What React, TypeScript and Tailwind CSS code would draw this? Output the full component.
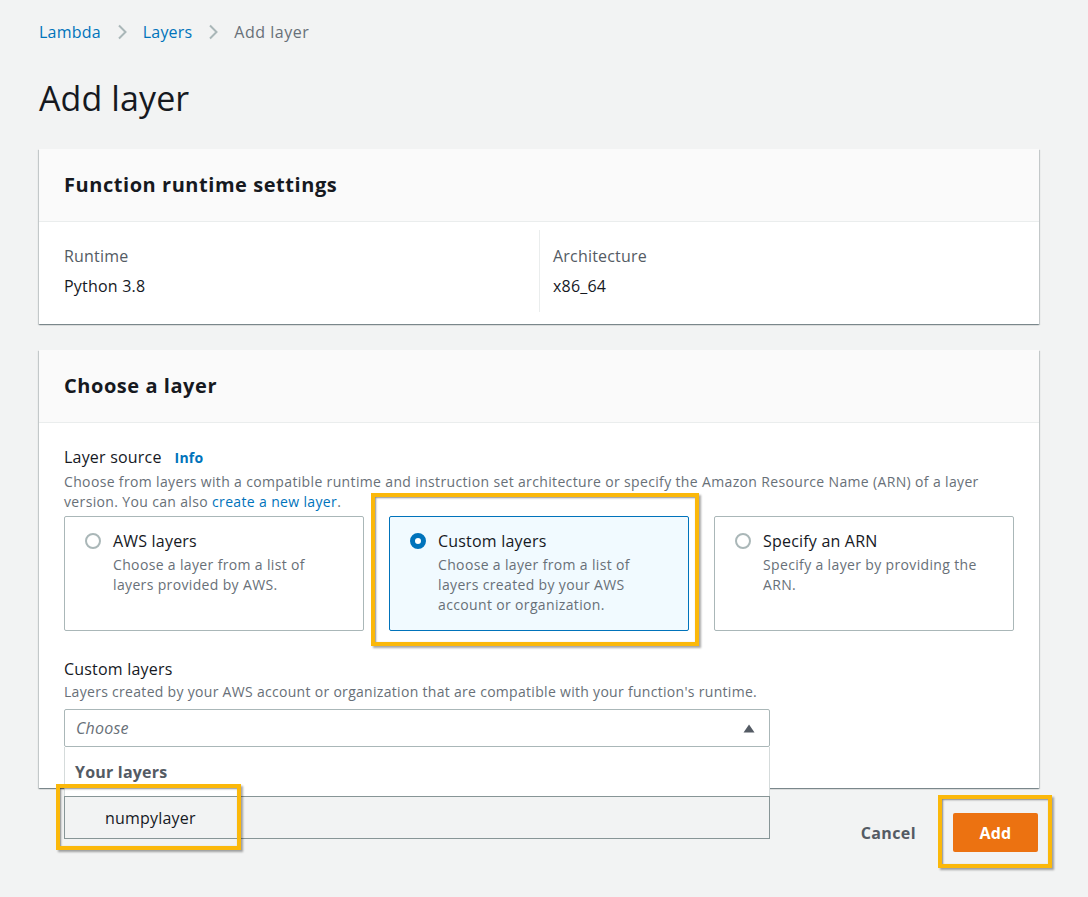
import { ReactNode } from 'react';

const tiles = [
  {
    id: 'aws',
    title: 'AWS layers',
    desc: 'Choose a layer from a list of layers provided by AWS.',
    selected: false,
  },
  {
    id: 'custom',
    title: 'Custom layers',
    desc: 'Choose a layer from a list of layers created by your AWS account or organization.',
    selected: true,
  },
  {
    id: 'arn',
    title: 'Specify an ARN',
    desc: 'Specify a layer by providing the ARN.',
    selected: false,
  },
];

function Chevron() {
  return (
    <svg width="12" height="18" viewBox="0 0 12 18" className="mx-[15px]" aria-hidden>
      <path d="M3 2.5l6.5 6.5L3 15.5" fill="none" stroke="#aab7b8" strokeWidth="2" />
    </svg>
  );
}

function Card({ title, children }: { title: string; children: ReactNode }) {
  return (
    <section className="bg-white shadow-[0_1px_1px_0_rgba(0,28,36,0.3),1px_1px_1px_0_rgba(0,28,36,0.15),-1px_1px_1px_0_rgba(0,28,36,0.15)]">
      <div className="flex h-[73px] items-center border-b border-[#eaeded] bg-[#fafafa] px-[25px]">
        <h2 className="text-[20px] font-bold leading-6 tracking-[0.55px] text-[#16191f]">{title}</h2>
      </div>
      {children}
    </section>
  );
}

function Highlight({ className }: { className: string }) {
  return (
    <div
      className={`pointer-events-none absolute border-[4px] border-[#fbb80a] shadow-[inset_1px_1px_2px_rgba(0,0,0,0.45),2px_2px_2px_rgba(0,0,0,0.35)] ${className}`}
    />
  );
}

export default function App() {
  return (
    <div className="relative min-h-[897px] bg-[#f2f3f3] pl-[39px] pt-[22px] font-['Open_Sans','Liberation_Sans',sans-serif] tracking-[0.2px] text-[#16191f]">
      <nav className="flex h-5 items-center text-[16px] leading-5">
        <a className="text-[#0073bb]">Lambda</a>
        <Chevron />
        <a className="text-[#0073bb]">Layers</a>
        <Chevron />
        <span className="tracking-[0.5px] text-[#687078]">Add layer</span>
      </nav>

      <h1 className="mt-[34px] text-[34px] font-normal leading-[44px] tracking-[0.1px]">Add layer</h1>

      <div className="mt-[29px] w-[1000px]">
        <Card title="Function runtime settings">
          <div className="grid grid-cols-2 px-[25px] pb-[12px] pt-[8px]">
            <div className="py-[16px]">
              <p className="text-[16px] leading-5 text-[#545b64]">Runtime</p>
              <p className="mt-[10px] text-[16px] leading-5">Python 3.8</p>
            </div>
            <div className="border-l border-[#eaeded] py-[16px] pl-[13px]">
              <p className="text-[16px] leading-5 text-[#545b64]">Architecture</p>
              <p className="mt-[10px] text-[16px] leading-5">x86_64</p>
            </div>
          </div>
        </Card>

        <div className="mt-[26px]">
          <Card title="Choose a layer">
            <div className="px-[25px] pb-[41px] pt-[23px]">
              <div className="flex h-[22px] items-baseline gap-[13px] leading-[22px]">
                <span className="text-[16px]">Layer source</span>
                <span className="text-[14px] font-bold text-[#0073bb]">Info</span>
              </div>
              <p className="mt-[4px] text-[14px] leading-5 tracking-[0.35px] text-[#687078]">
                Choose from layers with a compatible runtime and instruction set architecture or specify the Amazon
                Resource Name (ARN) of a layer version. You can also <a className="text-[#0073bb]">create a new layer</a>.
              </p>

              <div className="mt-[4px] grid grid-cols-3 gap-[25px]">
                {tiles.map((t) => (
                  <div
                    key={t.id}
                    className={`flex h-[115px] gap-[12px] rounded-[2px] border pl-[20px] pr-[16px] pt-[14px] ${
                      t.selected ? 'border-[#0073bb] bg-[#f1faff]' : 'border-[#aab7b8] bg-white'
                    }`}
                  >
                    <span
                      className={`mt-[2px] block h-4 w-4 shrink-0 rounded-full ${
                        t.selected ? 'border-[5px] border-[#0073bb] bg-white' : 'border-2 border-[#aab7b8] bg-white'
                      }`}
                    />
                    <div>
                      <p className="text-[16px] leading-5">{t.title}</p>
                      <p className="mt-[4px] text-[14px] leading-5 tracking-[0.35px] text-[#687078]">{t.desc}</p>
                    </div>
                  </div>
                ))}
              </div>

              <p className="mt-[27px] text-[16px] leading-[22px]">Custom layers</p>
              <p className="mt-[2px] text-[14px] leading-5 tracking-[0.3px] text-[#687078]">
                Layers created by your AWS account or organization that are compatible with your function's runtime.
              </p>

              <div className="relative mt-[7px] w-[706px]">
                <div className="flex h-[38px] items-center justify-between rounded-[2px] border border-[#aab7b8] bg-white pl-[11px] pr-[14px]">
                  <span className="text-[16px] italic text-[#687078]">Choose</span>
                  <svg width="12" height="9" viewBox="0 0 12 9" aria-hidden>
                    <path d="M6 0.5L11.5 8.5H0.5Z" fill="#545b64" />
                  </svg>
                </div>
                <div className="absolute left-0 right-0 top-full z-10 border-x border-[#d5dbdb] bg-white">
                  <div className="flex h-[49px] items-center px-[10px] text-[16px] font-bold text-[#545b64]">
                    Your layers
                  </div>
                  <div className="-mx-px flex h-[43px] items-center border border-[#879596] bg-[#f2f3f3] pl-[40px] text-[16px]">
                    numpylayer
                  </div>
                </div>
              </div>
            </div>
          </Card>
        </div>

        <div className="mt-[25px] flex items-center justify-end gap-[37px] pr-px">
          <button className="text-[16px] font-bold tracking-[0.4px] text-[#545b64]">Cancel</button>
          <button className="h-[39px] w-[85px] rounded-[2px] bg-[#ec7211] text-[16px] font-bold text-white">Add</button>
        </div>
      </div>

      <Highlight className="left-[371px] top-[493px] h-[153px] w-[328px]" />
      <Highlight className="left-[56px] top-[784px] z-20 h-[66px] w-[185px]" />
      <Highlight className="left-[938px] top-[795px] h-[73px] w-[114px]" />
    </div>
  );
}
